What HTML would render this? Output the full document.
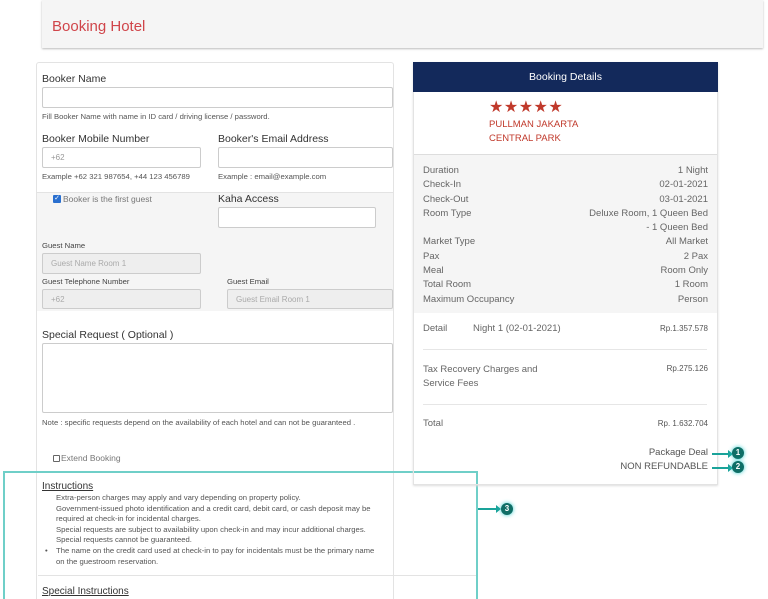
<!DOCTYPE html>
<html><head><meta charset="utf-8"><style>
*{box-sizing:border-box;margin:0;padding:0}
html,body{width:768px;height:599px;overflow:hidden}
body{background:#fff;font-family:"Liberation Sans",sans-serif;color:#444;position:relative}
.a{position:absolute;white-space:nowrap}
.lbl{font-size:10.5px;color:#333}
.sm{font-size:7.7px;color:#555}
.in{position:absolute;border:1px solid #ccc;background:#fff;border-radius:2px;font-size:8px;color:#999;padding:0 8px;display:flex;align-items:center}
.in.g{background:#eee;color:#aaa}
.r{font-size:9.5px;color:#666}
.circ{position:absolute;width:12px;height:12px;border-radius:50%;background:#0f6e66;color:#fff;font-size:8px;font-weight:bold;text-align:center;line-height:12px;box-shadow:0 0 4px #3cc}
.arr{position:absolute;height:2px;background:#1aa39a}
.arr:after{content:"";position:absolute;right:-1px;top:-3px;border-left:5px solid #1aa39a;border-top:4px solid transparent;border-bottom:4px solid transparent}
</style></head><body>
<div class="a" style="left:42px;top:0;width:721px;height:48px;background:#f5f5f5;box-shadow:0 1px 2px #bbb"></div>
<div class="a" style="left:52px;top:18px;font-size:15px;color:#d0454a">Booking Hotel</div>

<div class="a" style="left:36px;top:62px;width:358px;height:540px;border:1px solid #e3e3e3;border-radius:3px"></div>
<div class="a" style="left:37px;top:192px;width:356px;height:119px;background:#f5f5f5;border-top:1px solid #e3e3e3"></div>
<div class="a lbl" style="left:42px;top:73px">Booker Name</div>
<div class="in" style="left:42px;top:87px;width:351px;height:21px"></div>
<div class="a sm" style="left:42px;top:112px">Fill Booker Name with name in ID card / driving license / password.</div>
<div class="a lbl" style="left:42px;top:133px">Booker Mobile Number</div>
<div class="a lbl" style="left:218px;top:133px">Booker's Email Address</div>
<div class="in" style="left:42px;top:147px;width:159px;height:21px">+62</div>
<div class="in" style="left:218px;top:147px;width:175px;height:21px"></div>
<div class="a sm" style="left:42px;top:172px">Example +62 321 987654, +44 123 456789</div>
<div class="a sm" style="left:218px;top:172px">Example : email@example.com</div>
<div class="a" style="left:53px;top:195px;width:8px;height:8px;background:#2a6fcf;border-radius:1px;color:#fff;font-size:7px;line-height:8px;text-align:center">✓</div>
<div class="a" style="left:63px;top:194px;font-size:8.5px;color:#777">Booker is the first guest</div>
<div class="a lbl" style="left:218px;top:193px">Kaha Access</div>
<div class="in" style="left:218px;top:207px;width:158px;height:21px"></div>
<div class="a sm" style="left:42px;top:241px;color:#444">Guest Name</div>
<div class="in g" style="left:42px;top:253px;width:159px;height:21px">Guest Name Room 1</div>
<div class="a sm" style="left:42px;top:277px;color:#444">Guest Telephone Number</div>
<div class="a sm" style="left:227px;top:277px;color:#444">Guest Email</div>
<div class="in g" style="left:42px;top:289px;width:159px;height:20px">+62</div>
<div class="in g" style="left:227px;top:289px;width:166px;height:20px">Guest Email Room 1</div>
<div class="a lbl" style="left:42px;top:329px">Special Request ( Optional )</div>
<div class="in" style="left:42px;top:343px;width:351px;height:70px"></div>
<div class="a sm" style="left:42px;top:418px">Note : specific requests depend on the availability of each hotel and can not be guaranteed .</div>
<div class="a" style="left:53px;top:455px;width:7px;height:7px;border:1px solid #666;border-radius:1px"></div>
<div class="a" style="left:61px;top:453px;font-size:8.5px;color:#777">Extend Booking</div>

<div class="a" style="left:3px;top:471px;width:475px;height:140px;border:2px solid #6fcfc8"></div>
<div class="a" style="left:42px;top:481px;font-size:10px;color:#333;text-decoration:underline">Instructions</div>
<div class="a sm" style="left:56px;top:493px;line-height:10.6px">Extra-person charges may apply and vary depending on property policy.<br>Government-issued photo identification and a credit card, debit card, or cash deposit may be<br>required at check-in for incidental charges.<br>Special requests are subject to availability upon check-in and may incur additional charges.<br>Special requests cannot be guaranteed.<br>The name on the credit card used at check-in to pay for incidentals must be the primary name<br>on the guestroom reservation.</div>
<div class="a sm" style="left:45px;top:546px">•</div>
<div class="a" style="left:38px;top:575px;width:438px;height:1px;background:#e3e3e3"></div>
<div class="a" style="left:42px;top:586px;font-size:10px;color:#333;text-decoration:underline">Special Instructions</div>
<div class="arr" style="left:478px;top:508px;width:22px"></div>
<div class="circ" style="left:501px;top:503px">3</div>

<div class="a" style="left:413px;top:62px;width:305px;height:423px;border:1px solid #e3e3e3;box-shadow:0 1px 2px #ddd"></div>
<div class="a" style="left:413px;top:62px;width:305px;height:30px;background:#13295b;color:#fff;font-size:10.5px;text-align:center;line-height:30px">Booking Details</div>
<div class="a" style="left:489px;top:97px;font-size:16px;color:#c0392b;letter-spacing:0.5px">★★★★★</div>
<div class="a" style="left:489px;top:118px;font-size:9.5px;color:#c0392b;line-height:14px">PULLMAN JAKARTA<br>CENTRAL PARK</div>
<div class="a" style="left:414px;top:154px;width:303px;height:159px;background:#f5f5f5;border-top:1px solid #ddd"></div>
<div class="a r" style="left:423px;top:164px;line-height:14.3px">Duration<br>Check-In<br>Check-Out<br>Room Type<br>&nbsp;<br>Market Type<br>Pax<br>Meal<br>Total Room<br>Maximum Occupancy</div>
<div class="a r" style="right:60px;top:164px;line-height:14.3px;text-align:right">1 Night<br>02-01-2021<br>03-01-2021<br>Deluxe Room, 1 Queen Bed<br>- 1 Queen Bed<br>All Market<br>2 Pax<br>Room Only<br>1 Room<br>Person</div>
<div class="a r" style="left:423px;top:323px">Detail</div>
<div class="a r" style="left:473px;top:323px">Night 1 (02-01-2021)</div>
<div class="a" style="right:60px;top:324px;font-size:8px;color:#555">Rp.1.357.578</div>
<div class="a" style="left:423px;top:349px;width:284px;height:1px;background:#e6e6e6"></div>
<div class="a r" style="left:423px;top:363px;line-height:14.3px">Tax Recovery Charges and<br>Service Fees</div>
<div class="a" style="right:60px;top:364px;font-size:8px;color:#555">Rp.275.126</div>
<div class="a" style="left:423px;top:404px;width:284px;height:1px;background:#e6e6e6"></div>
<div class="a r" style="left:423px;top:418px">Total</div>
<div class="a" style="right:60px;top:419px;font-size:8px;color:#555">Rp. 1.632.704</div>
<div class="a" style="right:60px;top:447px;font-size:9.5px;color:#555">Package Deal</div>
<div class="a" style="right:60px;top:461px;font-size:9.5px;color:#555">NON REFUNDABLE</div>
<div class="arr" style="left:712px;top:453px;width:20px"></div>
<div class="circ" style="left:732px;top:447px">1</div>
<div class="arr" style="left:712px;top:467px;width:20px"></div>
<div class="circ" style="left:732px;top:461px">2</div>
</body></html>
